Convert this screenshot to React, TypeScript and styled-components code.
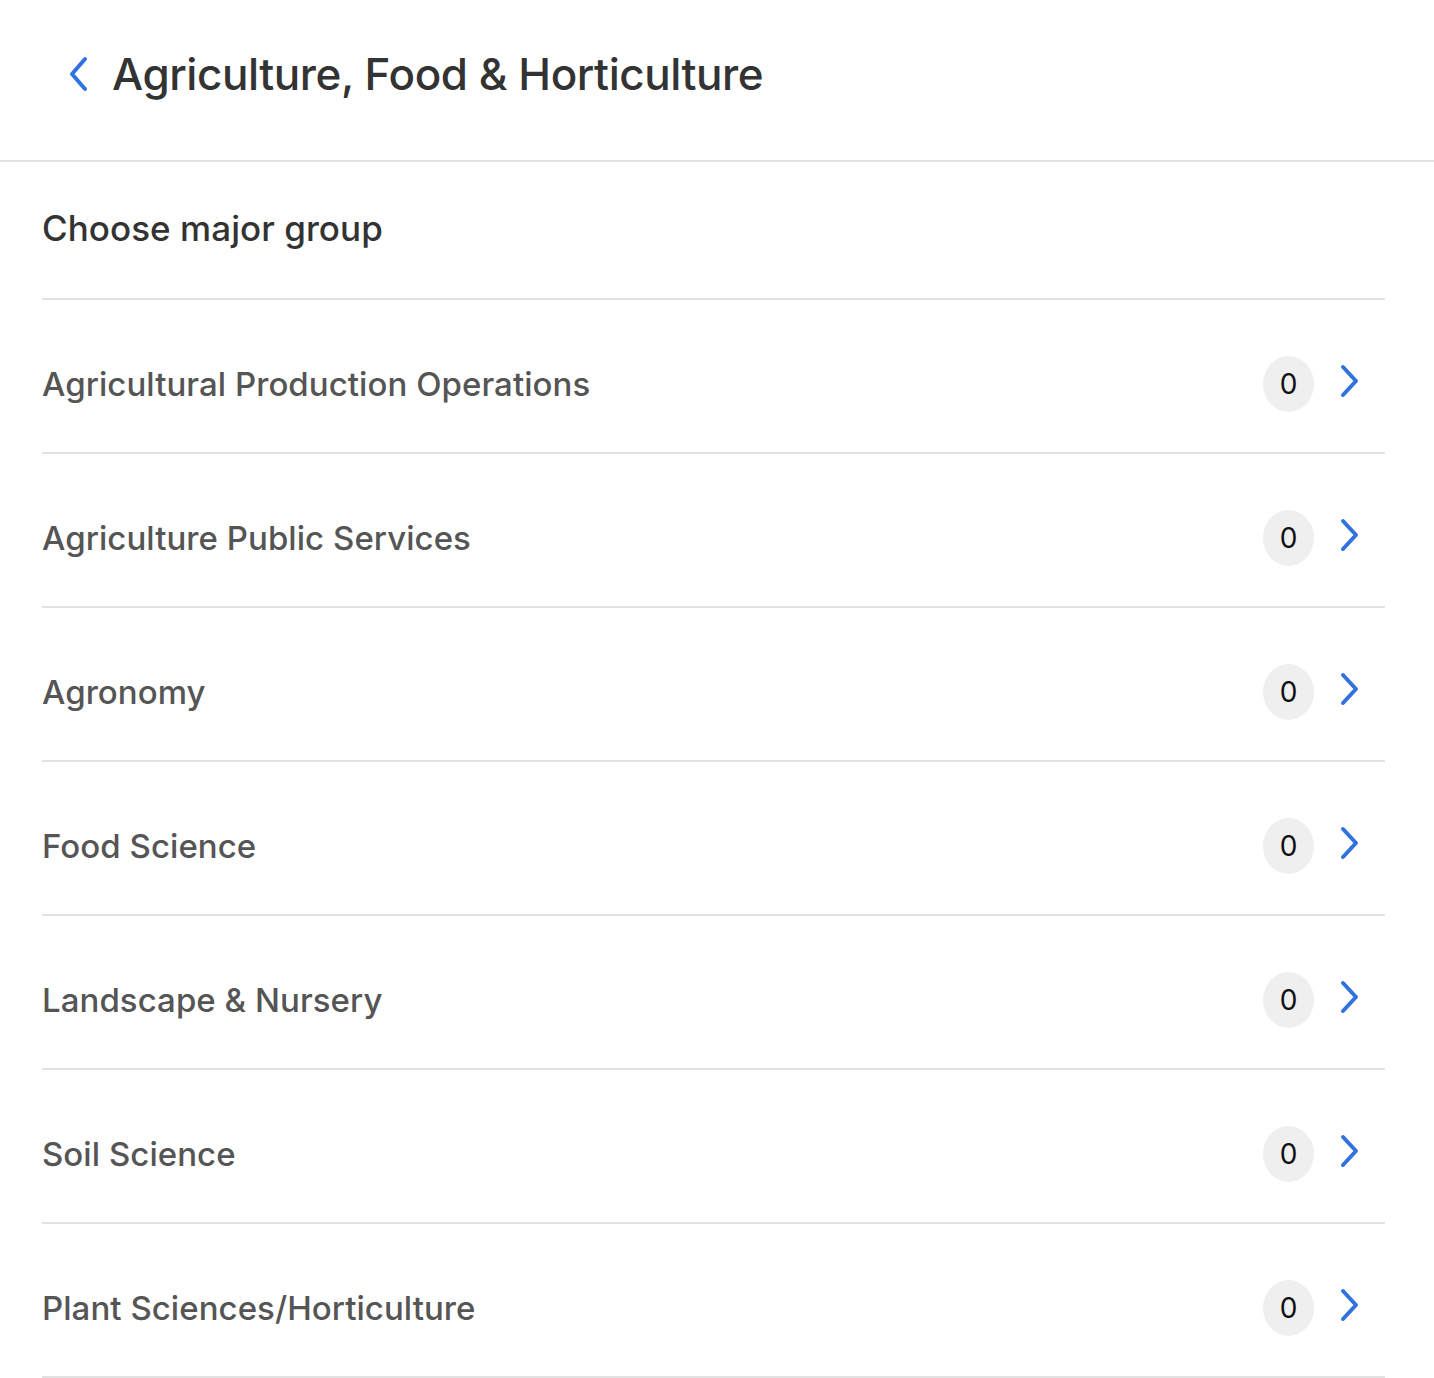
import React from 'react';
import styled, { createGlobalStyle } from 'styled-components';

const GlobalStyle = createGlobalStyle`
  body {
    margin: 0;
    background: #ffffff;
    font-family: Inter, "Liberation Sans", Arial, sans-serif;
  }
`;

const Page = styled.div`
  width: 1434px;
  background: #ffffff;
`;

const Header = styled.header`
  display: flex;
  align-items: center;
  height: 162px;
  padding: 0 0 12px 67px;
  border-bottom: 2px solid #e2e2e2;
  box-sizing: border-box;
`;

const BackButton = styled.button`
  display: flex;
  align-items: center;
  justify-content: center;
  background: none;
  border: none;
  padding: 0;
  margin-right: 23px;
  cursor: pointer;
`;

const Title = styled.h1`
  margin: 0;
  font-size: 44px;
  font-weight: 500;
  color: #333333;
  letter-spacing: -0.45px;
`;

const Content = styled.section`
  padding: 0 49px 0 42px;
`;

const SectionTitle = styled.h2`
  margin: 0;
  height: 138px;
  padding-bottom: 5px;
  display: flex;
  align-items: center;
  font-size: 35px;
  font-weight: 500;
  color: #333333;
  letter-spacing: 0.05px;
  border-bottom: 2px solid #e2e2e2;
  box-sizing: border-box;
`;

const Row = styled.div`
  display: flex;
  align-items: center;
  height: 154px;
  padding-top: 15px;
  border-bottom: 2px solid #e2e2e2;
  box-sizing: border-box;
  cursor: pointer;
`;

const RowLabel = styled.span`
  flex: 1;
  font-size: 33px;
  font-weight: 500;
  color: #555555;
  letter-spacing: 0.05px;
`;

const Badge = styled.span`
  width: 51px;
  height: 56px;
  border-radius: 50%;
  background: #efefef;
  display: flex;
  align-items: center;
  justify-content: center;
  font-size: 28px;
  font-weight: 400;
  color: #111111;
  margin-right: 25px;
`;

const Chevron = styled.span`
  display: flex;
  margin-right: 24px;
  margin-top: -4px;
`;

const groups = [
  'Agricultural Production Operations',
  'Agriculture Public Services',
  'Agronomy',
  'Food Science',
  'Landscape & Nursery',
  'Soil Science',
  'Plant Sciences/Horticulture',
];

function ChevronIcon({ left }: { left?: boolean }) {
  return (
    <svg width="22" height="36" viewBox="0 0 22 36" fill="none">
      <path
        d={left ? 'M18 3 L5 18 L18 33' : 'M4 3 L17 17 L4 31'}
        stroke="#3172e0"
        strokeWidth="4"
        strokeLinecap="round"
        strokeLinejoin="round"
      />
    </svg>
  );
}

export default function App() {
  return (
    <Page>
      <GlobalStyle />
      <Header>
        <BackButton aria-label="Back">
          <ChevronIcon left />
        </BackButton>
        <Title>Agriculture, Food &amp; Horticulture</Title>
      </Header>
      <Content>
        <SectionTitle>Choose major group</SectionTitle>
        {groups.map((g) => (
          <Row key={g}>
            <RowLabel>{g}</RowLabel>
            <Badge>0</Badge>
            <Chevron>
              <ChevronIcon />
            </Chevron>
          </Row>
        ))}
      </Content>
    </Page>
  );
}
